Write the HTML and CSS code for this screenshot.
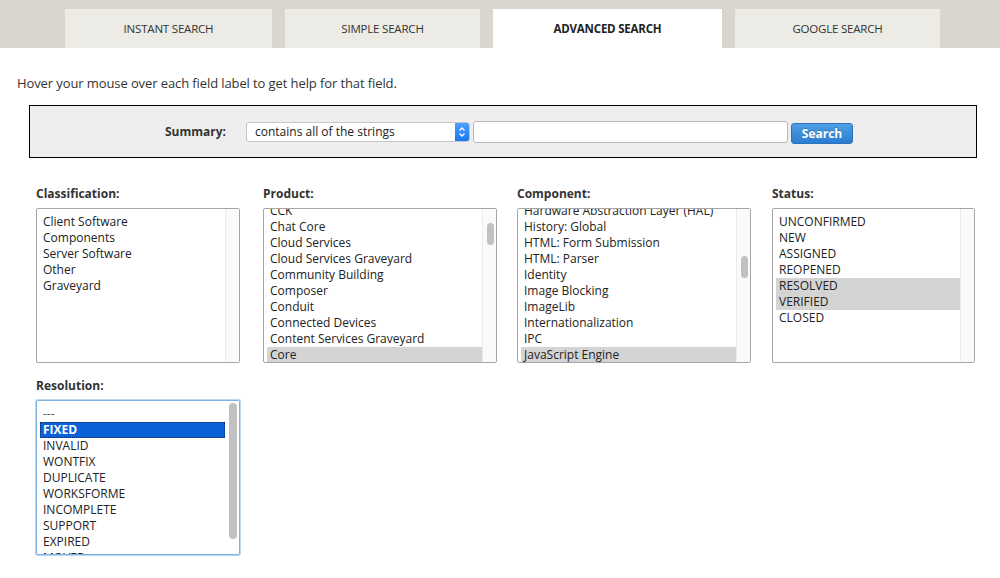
FILE: index.html
```html
<!DOCTYPE html>
<html>
<head>
<meta charset="utf-8">
<link rel="stylesheet" href="styles.css">
</head>
<body>
<div class="header">
  <nav class="tabs">
    <a class="tab t1">INSTANT SEARCH</a>
    <a class="tab t2">SIMPLE SEARCH</a>
    <a class="tab t3 active">ADVANCED SEARCH</a>
    <a class="tab t4">GOOGLE SEARCH</a>
  </nav>
</div>
<p class="intro">Hover your mouse over each field label to get help for that field.</p>
<div class="summary">
  <span class="sum-label">Summary:</span>
  <div class="fake-select">
    <span>contains all of the strings</span>
    <span class="arrow"><svg width="8" height="12" viewBox="0 0 8 12"><path d="M1.5 4.5 L4 2 L6.5 4.5 M1.5 7.5 L4 10 L6.5 7.5" fill="none" stroke="#fff" stroke-width="1.3"/></svg></span>
  </div>
  <div class="text-input"></div>
  <button class="search-btn">Search</button>
</div>

<div class="fields">
  <div class="field f1">
    <div class="flabel">Classification:</div>
    <div class="listbox w204">
      <div class="items">
        <div class="opt">Client Software</div>
        <div class="opt">Components</div>
        <div class="opt">Server Software</div>
        <div class="opt">Other</div>
        <div class="opt">Graveyard</div>
      </div>
      <div class="track"></div>
    </div>
  </div>
  <div class="field f2">
    <div class="flabel">Product:</div>
    <div class="listbox w234">
      <div class="items scrolled">
        <div class="opt">CCK</div>
        <div class="opt">Chat Core</div>
        <div class="opt">Cloud Services</div>
        <div class="opt">Cloud Services Graveyard</div>
        <div class="opt">Community Building</div>
        <div class="opt">Composer</div>
        <div class="opt">Conduit</div>
        <div class="opt">Connected Devices</div>
        <div class="opt">Content Services Graveyard</div>
        <div class="opt sel">Core</div>
      </div>
      <div class="track"><div class="thumb thumb-prod"></div></div>
    </div>
  </div>
  <div class="field f3">
    <div class="flabel">Component:</div>
    <div class="listbox w234">
      <div class="items scrolled">
        <div class="opt">Hardware Abstraction Layer (HAL)</div>
        <div class="opt">History: Global</div>
        <div class="opt">HTML: Form Submission</div>
        <div class="opt">HTML: Parser</div>
        <div class="opt">Identity</div>
        <div class="opt">Image Blocking</div>
        <div class="opt">ImageLib</div>
        <div class="opt">Internationalization</div>
        <div class="opt">IPC</div>
        <div class="opt sel">JavaScript Engine</div>
      </div>
      <div class="track"><div class="thumb thumb-comp"></div></div>
    </div>
  </div>
  <div class="field f4">
    <div class="flabel">Status:</div>
    <div class="listbox w203">
      <div class="items">
        <div class="opt">UNCONFIRMED</div>
        <div class="opt">NEW</div>
        <div class="opt">ASSIGNED</div>
        <div class="opt">REOPENED</div>
        <div class="opt sel">RESOLVED</div>
        <div class="opt sel">VERIFIED</div>
        <div class="opt">CLOSED</div>
      </div>
      <div class="track"></div>
    </div>
  </div>
</div>

<div class="fields row2">
  <div class="field f1">
    <div class="flabel">Resolution:</div>
    <div class="listbox w204 focus">
      <div class="items">
        <div class="opt dash">---</div>
        <div class="opt active-sel">FIXED</div>
        <div class="opt">INVALID</div>
        <div class="opt">WONTFIX</div>
        <div class="opt">DUPLICATE</div>
        <div class="opt">WORKSFORME</div>
        <div class="opt">INCOMPLETE</div>
        <div class="opt">SUPPORT</div>
        <div class="opt">EXPIRED</div>
        <div class="opt">MOVED</div>
      </div>
      <div class="track plain"><div class="thumb thumb-res"></div></div>
    </div>
  </div>
</div>
</body>
</html>
```
FILE: styles.css
```css
html, body {
  margin: 0;
  padding: 0;
  background: #fff;
}
body {
  font-family: "Open Sans", "Noto Sans", sans-serif;
  font-size: 12px;
  color: #222;
  width: 1000px;
  height: 578px;
  overflow: hidden;
}
.header {
  height: 48px;
  background: #dad6ce;
  padding-top: 9px;
  box-sizing: border-box;
}
.tabs {
  display: flex;
  height: 39px;
  padding-left: 65px;
}
.tab {
  display: flex;
  align-items: center;
  justify-content: center;
  background: #ecebe6;
  color: #333;
  font-size: 11.5px;
  letter-spacing: -0.2px;
  margin-right: 13px;
}
.t1 { width: 207px; }
.t2 { width: 195px; }
.t3 { width: 229px; }
.t4 { width: 205px; }
.tab.active {
  background: #fff;
  font-weight: bold;
  color: #222;
}
.intro {
  margin: 0;
  padding: 26px 0 0 17px;
  height: 18px;
  line-height: 18px;
  font-size: 13px;
  color: #333;
  letter-spacing: -0.1px;
}
.summary {
  margin: 13px 0 0 29px;
  width: 946px;
  height: 51px;
  border: 1px solid #000;
  background: #eeeeee;
  display: flex;
  align-items: center;
}
.sum-label {
  width: 196px;
  text-align: right;
  font-weight: bold;
  color: #333;
  font-size: 12px;
  margin-right: 20px;
}
.fake-select {
  width: 222px;
  height: 18px;
  border: 1px solid #c5c5c5;
  border-radius: 3px;
  background: #fff;
  display: flex;
  align-items: center;
  justify-content: space-between;
  font-size: 12px;
  box-sizing: content-box;
  overflow: hidden;
}
.fake-select span:first-child {
  padding-left: 8px;
}
.arrow {
  width: 14px;
  height: 18px;
  background: linear-gradient(#4aa0ff, #1d76ef);
  display: flex;
  align-items: center;
  justify-content: center;
}
.text-input {
  width: 313px;
  height: 20px;
  margin-left: 3px;
  border: 1px solid #b9b9b9;
  border-radius: 3px;
  background: #fff;
}
.search-btn {
  margin-left: 3px;
  margin-top: 3px;
  width: 62px;
  height: 21px;
  border: 1px solid #2a73bd;
  border-radius: 3px;
  background: linear-gradient(#4f9fe6, #2a7dd0);
  color: #fff;
  font-family: "Open Sans", sans-serif;
  font-weight: bold;
  font-size: 12px;
  padding: 0;
  text-shadow: 0 -1px 0 rgba(0,0,0,0.2);
}
.fields {
  display: flex;
  padding-left: 36px;
  margin-top: 28px;
}
.row2 {
  margin-top: 15px;
}
.f1 { width: 227px; }
.f2 { width: 254px; }
.f3 { width: 255px; }
.flabel {
  font-weight: bold;
  color: #333;
  font-size: 12px;
  height: 16px;
  line-height: 16px;
  margin-bottom: 6px;
}
.listbox {
  height: 153px;
  border: 1px solid #a6a6a6;
  border-radius: 2px;
  background: #fff;
  display: flex;
  overflow: hidden;
}
.w204 { width: 202px; }
.w234 { width: 232px; }
.w203 { width: 201px; }
.items {
  flex: 1;
  padding: 5px 0 0 3px;
  overflow: hidden;
}
.items.scrolled .opt:first-child {
  margin-top: -11px;
}
.opt {
  height: 16px;
  line-height: 16px;
  padding-left: 3px;
  white-space: nowrap;
  color: #222;
}
.opt.sel {
  background: #d4d4d4;
}
.track {
  width: 13px;
  background: #fafafa;
  border-left: 1px solid #ececec;
  position: relative;
}
.track.plain {
  width: 14px;
  background: #fff;
  border-left: none;
}
.thumb {
  position: absolute;
  left: 4px;
  width: 7px;
  background: #c1c1c1;
  border-radius: 4px;
}
.thumb-prod { top: 14px; height: 22px; }
.thumb-comp { top: 47px; height: 22px; }
.thumb-res { top: 2px; left: 4px; width: 8px; height: 136px; }
.listbox.focus {
  border: 1px solid #7fb3e6;
  box-shadow: 0 0 0 1px #b9d7f3;
}
.opt.dash { color: #555; }
.opt.active-sel {
  background: #0a62d8;
  color: #fff;
  font-weight: bold;
  outline: 1px dotted #002a77;
  outline-offset: -1px;
}
```
